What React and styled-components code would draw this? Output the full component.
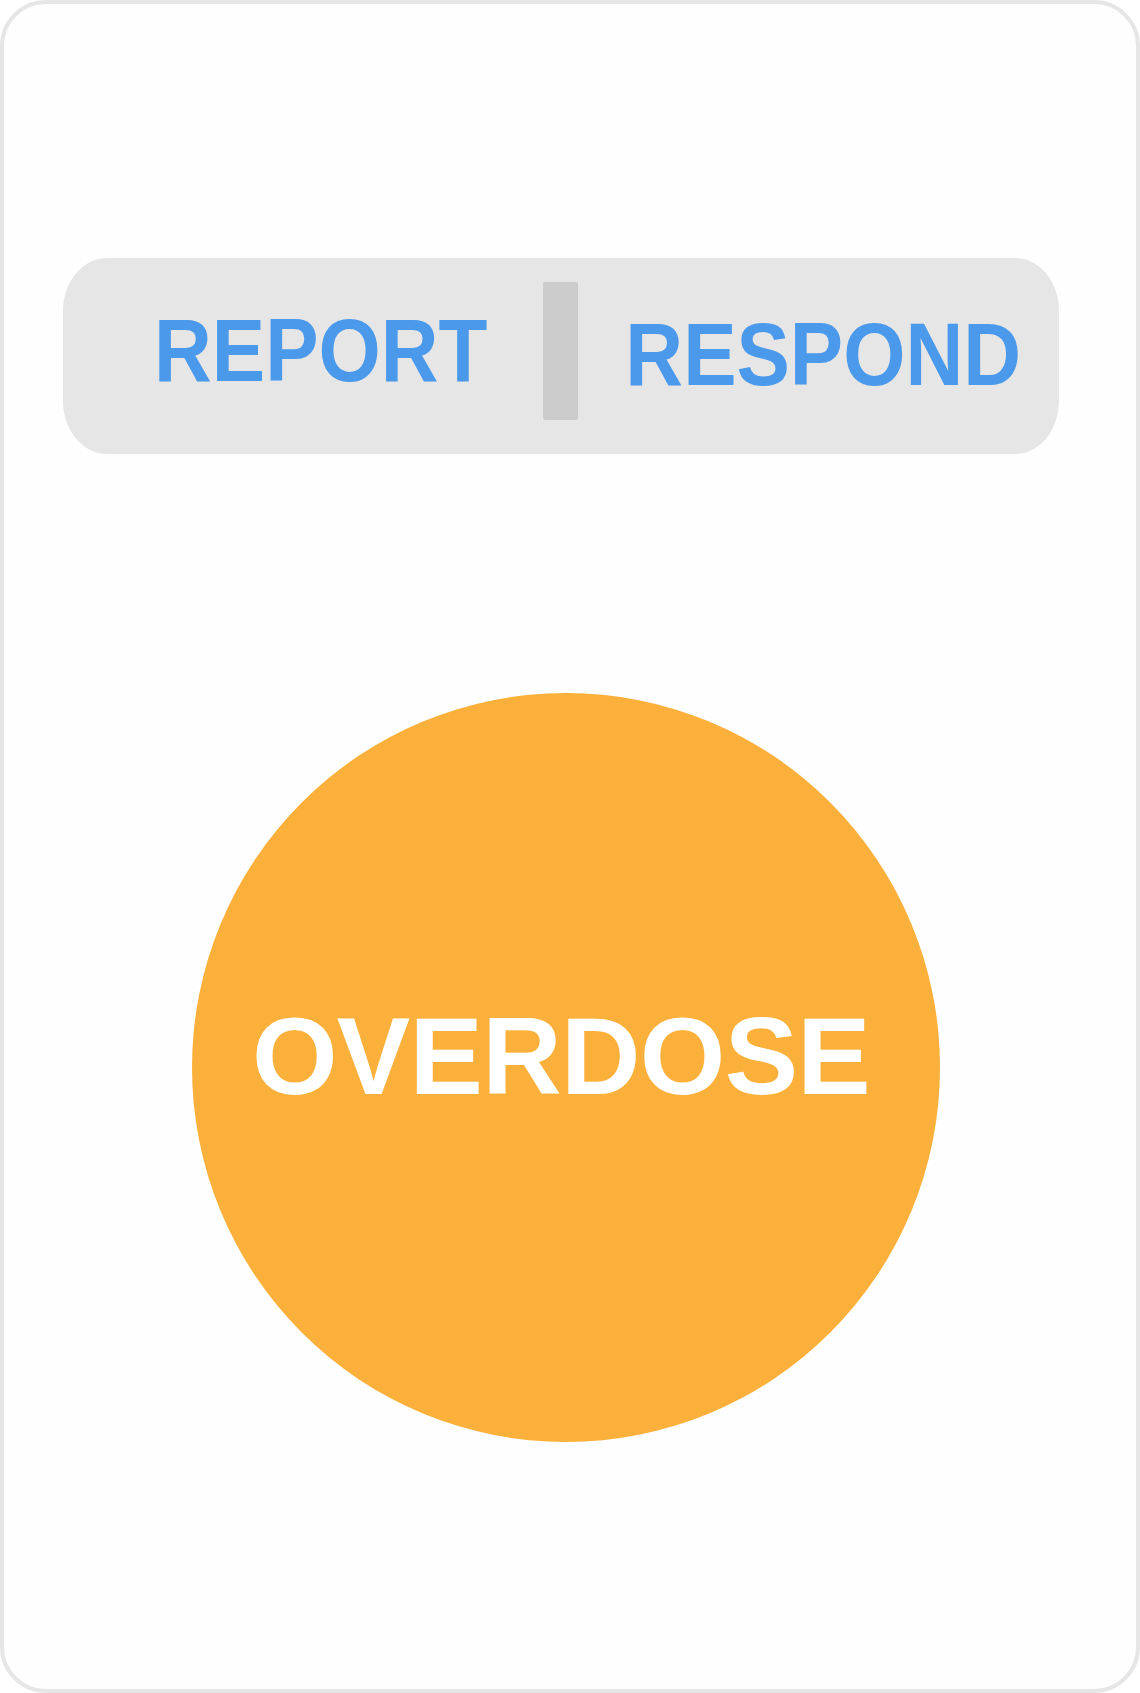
import React from "react";
import styled, { createGlobalStyle } from "styled-components";

const Global = createGlobalStyle`
  html, body {
    margin: 0;
    padding: 0;
    background: #ffffff;
  }
  * { box-sizing: border-box; }
`;

const Frame = styled.div`
  width: 1140px;
  height: 1693px;
  border: 4px solid #e6e6e6;
  border-radius: 46px;
  background: #fefefe;
  display: flex;
  flex-direction: column;
  align-items: flex-start;
  padding-top: 254px;
  font-family: "Liberation Sans", Arial, sans-serif;
`;

const Toggle = styled.div`
  margin-left: 59px;
  width: 996px;
  height: 196px;
  background: #e6e6e6;
  border-radius: 44px / 53px;
  display: flex;
  align-items: center;
  padding-left: 91px;
`;

const Label = styled.span`
  display: block;
  font-size: 80px;
  line-height: 1;
  font-weight: 700;
  color: #4a99eb;
  white-space: nowrap;
  transform: scaleY(1.11);
  margin-left: ${(p) => p.$gap || 0}px;
  margin-bottom: ${(p) => p.$lift || 0}px;
`;

const Divider = styled.div`
  width: 35px;
  height: 138px;
  background: #cccccc;
  border-radius: 2px;
  margin-left: 56px;
  margin-bottom: 10px;
  flex-shrink: 0;
`;

const Circle = styled.button`
  margin-top: 239px;
  margin-left: 188px;
  width: 748px;
  height: 749px;
  border: none;
  border-radius: 50%;
  background: #fbb03b;
  display: flex;
  align-items: center;
  justify-content: center;
  padding: 0 10px 24px 0;
  cursor: pointer;
  font-family: inherit;
`;

const CircleText = styled.span`
  font-size: 110px;
  line-height: 1;
  font-weight: 700;
  letter-spacing: -0.68px;
  color: #ffffff;
  white-space: nowrap;
`;

export default function App() {
  return (
    <>
      <Global />
      <Frame>
        <Toggle>
          <Label $lift={11}>REPORT</Label>
          <Divider />
          <Label $gap={47} $lift={2}>RESPOND</Label>
        </Toggle>
        <Circle>
          <CircleText>OVERDOSE</CircleText>
        </Circle>
      </Frame>
    </>
  );
}
